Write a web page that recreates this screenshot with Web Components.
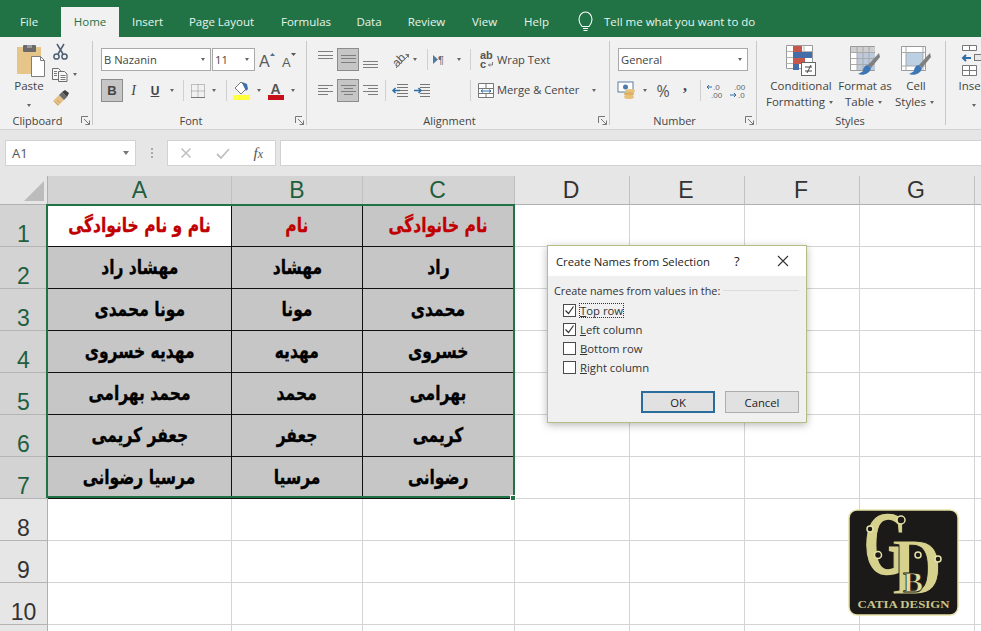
<!DOCTYPE html>
<html><head><meta charset="utf-8"><title>Excel</title>
<style>html,body{margin:0;padding:0;background:#fff}</style>
</head><body>
<x-app>
  <x-tabbar></x-tabbar>
  <x-ribbon>
    <x-rgroup w="93" label="Clipboard" launcher>
      <x-row pt="8">
        <x-sp w="4"></x-sp>
        <x-big w="50" icon="paste" iw="28" ih="32" ix="3"><span>Paste</span><br><x-caret></x-caret></x-big>
        <x-col>
          <x-tool w="18" h="23"><x-ico name="scissors" w="15" h="16"></x-ico></x-tool>
          <x-row><x-tool w="18" h="23"><x-ico name="copy" w="16" h="15"></x-ico></x-tool><x-caret w="12"></x-caret></x-row>
          <x-tool w="18" h="23"><x-ico name="brush" w="17" h="16"></x-ico></x-tool>
        </x-col>
      </x-row>
    </x-rgroup>
    <x-rgroup w="214" label="Font" launcher>
      <x-row pt="11" pl="8">
        <x-combo w="110" text="B Nazanin"></x-combo><x-sp w="1"></x-sp><x-combo w="43" text="11"></x-combo>
        <x-tool w="22" h="23"><x-ico name="grow" w="18" h="18"></x-ico></x-tool>
        <x-tool w="22" h="23"><x-ico name="shrink" w="18" h="18"></x-ico></x-tool>
      </x-row>
      <x-row pt="8" pl="8">
        <x-tool w="22" h="23" pressed><b style="font:bold 13px 'Liberation Sans',sans-serif;color:#444">B</b></x-tool>
        <x-tool w="21" h="23"><i style="font:italic 14px 'Liberation Serif',serif;color:#444">I</i></x-tool>
        <x-tool w="22" h="23"><b style="font:bold 12px 'Liberation Sans',sans-serif;color:#444;text-decoration:underline">U</b></x-tool>
        <x-caret w="12"></x-caret><x-sep w="10"></x-sep>
        <x-tool w="20" h="23"><x-ico name="borders" w="14" h="14"></x-ico></x-tool>
        <x-caret w="12"></x-caret><x-sep w="12"></x-sep>
        <x-tool w="20" h="23"><x-ico name="fill" w="18" h="19"></x-ico></x-tool>
        <x-caret w="14"></x-caret>
        <x-tool w="20" h="23"><x-ico name="fontcolor" w="18" h="19"></x-ico></x-tool>
        <x-sp w="1"></x-sp><x-caret w="12"></x-caret>
      </x-row>
    </x-rgroup>
    <x-rgroup w="303" label="Alignment" launcher>
      <x-row pt="11" pl="11">
        <x-tool w="15" h="23"><x-ico name="atop" w="15" h="23"></x-ico></x-tool><x-sp w="4"></x-sp>
        <x-tool w="22" h="23" pressed><x-ico name="amid" w="15" h="21"></x-ico></x-tool>
        <x-tool w="22" h="23"><x-ico name="abot" w="15" h="23"></x-ico></x-tool>
        <x-sp w="9"></x-sp>
        <x-tool w="20" h="23"><x-ico name="orient" w="18" h="18"></x-ico></x-tool><x-caret w="10"></x-caret>
        <x-sp w="2"></x-sp><x-sep w="10"></x-sep>
        <x-tool w="16" h="23"><x-ico name="rtl" w="14" h="12"></x-ico></x-tool><x-sp w="6"></x-sp><x-caret w="10"></x-caret>
        <x-sp w="1"></x-sp><x-sep w="10"></x-sep><x-sp w="4"></x-sp>
        <x-tool w="14" h="23"><x-ico name="wrap" w="14" h="18"></x-ico></x-tool><x-sp w="4"></x-sp>
        <x-tool h="23" text>Wrap Text</x-tool>
      </x-row>
      <x-row pt="8" pl="11">
        <x-tool w="15" h="23"><x-ico name="aleft" w="15" h="15"></x-ico></x-tool><x-sp w="4"></x-sp>
        <x-tool w="22" h="23" pressed><x-ico name="acenter" w="15" h="13"></x-ico></x-tool>
        <x-tool w="22" h="23"><x-ico name="aright" w="15" h="15"></x-ico></x-tool>
        <x-sep w="8"></x-sep>
        <x-tool w="20" h="23"><x-ico name="outdent" w="17" h="14"></x-ico></x-tool><x-sp w="2"></x-sp>
        <x-tool w="20" h="23"><x-ico name="indent" w="17" h="14"></x-ico></x-tool>
        <x-sp w="34"></x-sp><x-sep w="10"></x-sep><x-sp w="3"></x-sp>
        <x-tool w="16" h="23"><x-ico name="merge" w="16" h="15"></x-ico></x-tool><x-sp w="3"></x-sp>
        <x-tool w="85" h="23" text><span style="position:relative;top:-1px">Merge &amp; Center</span></x-tool><x-sp w="7"></x-sp><x-caret w="10"></x-caret>
      </x-row>
    </x-rgroup>
    <x-rgroup w="147" label="Number" launcher>
      <x-row pt="11" pl="8"><x-combo w="130" text="General"></x-combo></x-row>
      <x-row pt="8" pl="8">
        <x-tool w="18" h="23"><x-ico name="currency" w="18" h="17"></x-ico></x-tool><x-sp w="4"></x-sp><x-caret w="10"></x-caret><x-sp w="3"></x-sp>
        <x-tool w="20" h="23"><span style="font:16px 'Open Sans',sans-serif;color:#555">%</span></x-tool><x-sp w="2"></x-sp>
        <x-tool w="20" h="23"><b style="font:bold 16px 'Liberation Serif',serif;color:#444;position:relative;top:-5px">,</b></x-tool>
        <x-sep w="10"></x-sep>
        <x-tool w="20" h="23"><x-ico name="incdec" w="18" h="16"></x-ico></x-tool><x-sp w="3"></x-sp>
        <x-tool w="20" h="23"><x-ico name="decdec" w="18" h="16"></x-ico></x-tool>
      </x-row>
    </x-rgroup>
    <x-rgroup w="189" label="Styles" lshift="2">
      <x-row pt="8" pl="10">
        <x-big w="68" icon="cond" iw="30" ih="32">Conditional<br>Formatting<x-caret inline></x-caret></x-big>
        <x-big w="60" icon="fmttable" iw="30" ih="32">Format as<br>Table<x-caret inline></x-caret></x-big>
        <x-big w="42" icon="cellstyles" iw="30" ih="32">Cell<br>Styles<x-caret inline></x-caret></x-big>
      </x-row>
    </x-rgroup>
    <x-rgroup w="60" label="">
      <x-row pt="8" pl="3">
        <x-big w="50" icon="insert" iw="24" ih="32">Insert<br><x-caret></x-caret></x-big>
      </x-row>
    </x-rgroup>
  </x-ribbon>
  <x-formulabar></x-formulabar>
  <x-sheet></x-sheet>
  <x-dialog heading="Create Names from Selection">
    <span slot="legend">Create names from values in the:</span>
    <x-check checked focus key="T" rest="op row"></x-check>
    <x-check checked key="L" rest="eft column"></x-check>
    <x-check key="B" rest="ottom row"></x-check>
    <x-check key="R" rest="ight column"></x-check>
    <x-dbtn slot="buttons" default>OK</x-dbtn>
    <x-dbtn slot="buttons">Cancel</x-dbtn>
  </x-dialog>
  <x-logo></x-logo>
</x-app>
<script>
const UI = "'Open Sans','Noto Sans',sans-serif";
const line = (x1,x2,y,c='#7d7d7d')=>`<path d="M${x1} ${y+.5}H${x2}" stroke="${c}"/>`;
const ICONS = {
 paste:`<rect x="0" y="2" width="24" height="27" fill="#e6c588"/><rect x="6" y="0" width="13" height="7" rx="1" fill="#6a6a6a"/><rect x="10" y="0" width="5" height="3" fill="#9a9a9a"/><path d="M14.5 11.5h9l4 4v16h-13z" fill="#fff" stroke="#7d7d7d"/><path d="M23.5 11.5v4h4" fill="none" stroke="#7d7d7d"/>`,
 scissors:`<g fill="none" stroke="#4e5f73" stroke-width="1.5"><circle cx="3.5" cy="12.5" r="2.6"/><circle cx="11.5" cy="12.5" r="2.6"/><path d="M5 10 11 0M10 10 4 0"/></g>`,
 copy:`<g fill="#f6f6f6" stroke="#6d6d6d"><path d="M.5 1.5h6l2 2v9h-8z"/><path d="M6.5 4.5h6l2.5 2.5v7.5h-8.500z"/></g><path d="M8.500 8.500h5M8.500 10.500h5M8.500 12.500h5M2 4.500h3M2 6.500h3M2 8.500h3" stroke="#7a7a7a"/>`,
 brush:`<path d="M1 11 7 5l5 5-6 6z" fill="#e3c083"/><path d="M7 5l3-3 5 5-3 3z" fill="#6c6c6c"/><path d="M10 2l3-2 4 3-2 4z" fill="#3f3f3f"/><path d="M3 12l3 3M5 10l3 3" stroke="#c9a264"/>`,
 grow:`<text x="2" y="16" font-family="Liberation Sans" font-size="16" fill="#5a5a5a">A</text><path d="M13 5l2.500-3 2.500 3z" fill="#4f6f8f"/>`,
 shrink:`<text x="3" y="16" font-family="Liberation Sans" font-size="13" fill="#5a5a5a">A</text><path d="M12 2l2.500 3 2.500-3z" fill="#555"/>`,
 borders:`<path d="M.5.5h13v13H.5zM7 .5v13M.5 7h13" fill="none" stroke="#8a8a8a" stroke-dasharray="1 1"/><path d="M0 13.500h14" stroke="#777"/>`,
 fill:`<path d="M8 1 14 7 8 13 2 7z" fill="#fff" stroke="#777"/><path d="M9 1l5 2 1 5-2 2-3-6z" fill="#3f6fa8"/><rect x="0" y="14" width="17" height="5" fill="#ffff3c"/>`,
 fontcolor:`<text x="3.500" y="13" font-family="Liberation Sans" font-weight="bold" font-size="14" fill="#555">A</text><rect x="1" y="14" width="16" height="5" fill="#c8101a"/>`,
 atop:[3,7,10].map(y=>line(0,15,y)).join(''),
 amid:[6,9,13].map(y=>line(0,15,y)).join(''),
 abot:[13,16,19].map(y=>line(0,15,y)).join(''),
 aleft:[2,5,8,11].map((y,i)=>line(0,i%2?10:15,y)).join(''),
 acenter:[1,4,7,10].map((y,i)=>line(i%2?3:0,i%2?12:15,y)).join(''),
 aright:[2,5,8,11].map((y,i)=>line(i%2?5:0,15,y)).join(''),
 orient:`<g transform="rotate(-45 8 9)"><text x="1" y="13" font-family="Liberation Sans" font-size="12" fill="#555">ab</text></g><path d="M5 17 17 5" stroke="#777"/><path d="M14 3h4v4z" fill="#777"/>`,
 rtl:`<path d="M0 1v9l5-4.500z" fill="#4b7aa8"/><text x="5" y="10" font-family="Liberation Sans" font-size="11" fill="#666">¶</text>`,
 wrap:`<text x="1" y="8" font-family="Liberation Sans" font-size="11" font-weight="bold" fill="#555">ab</text><text x="1" y="17" font-family="Liberation Sans" font-size="11" font-weight="bold" fill="#555">c</text><path d="M13.500 11v3h-4M11 12.500 9.500 14l1.500 1.500" fill="none" stroke="#7a7a7a"/>`,
 outdent:[0,3,6,9,12].map(y=>line(6,17,y,'#777')).join('')+`<path d="M9 6.500H2M4.500 4 2 6.500 4.500 9" fill="none" stroke="#2f6ea5" stroke-width="1.500"/>`,
 indent:[0,3,6,9,12].map(y=>line(7,17,y,'#777')).join('')+`<path d="M1 6.500h7M5.500 4 8 6.500 5.500 9" fill="none" stroke="#2f6ea5" stroke-width="1.500"/>`,
 merge:`<path d="M.5.500h15v14H.5zM.5 5.500h15M.5 10.500h15M8 .5v5M8 10.500v4" fill="#fdfdfd" stroke="#777"/><path d="M3 8h10M5 6.500 3 8l2 1.500M11 6.500 13 8l-2 1.500" fill="none" stroke="#2f6ea5"/>`,
 currency:`<rect x="0" y="0" width="15" height="10" fill="#fff" stroke="#5b7f9c"/><circle cx="7.500" cy="5" r="2.500" fill="#4b7aa8"/><ellipse cx="12" cy="9" rx="5" ry="2" fill="#e7c27c"/><ellipse cx="11" cy="12" rx="5" ry="2" fill="#dcb266"/><ellipse cx="11" cy="15" rx="5" ry="2" fill="#e7c27c"/>`,
 incdec:`<text x="7" y="7" font-family="Liberation Sans" font-size="8" fill="#666">.0</text><text x="5" y="15" font-family="Liberation Sans" font-size="8" fill="#666">.00</text><path d="M6 4H1M3 2 1 4l2 2" fill="none" stroke="#2f6ea5"/>`,
 decdec:`<text x="5" y="7" font-family="Liberation Sans" font-size="8" fill="#666">.00</text><text x="9" y="15" font-family="Liberation Sans" font-size="8" fill="#666">.0</text><path d="M1 12h6M5 10l2 2-2 2" fill="none" stroke="#2f6ea5"/>`,
 cond:`<path d="M.5.500h26v23H.5z" fill="#fff" stroke="#9a9a9a"/><path d="M.5 6.500h26M.5 12.500h26M.5 18.500h26M9 .5v23M18 .5v23" stroke="#b5b5b5"/><rect x="7" y="1" width="9" height="6" fill="#c8574b"/><rect x="7" y="7" width="19" height="6" fill="#456ea8"/><rect x="7" y="13" width="12" height="6" fill="#c8574b"/><rect x="7" y="19" width="6" height="6" fill="#456ea8"/><rect x="15.500" y="17.500" width="14" height="13" fill="#fff" stroke="#666"/><path d="M19 22h7M19 26h7M25 20l-4 8" stroke="#444" fill="none"/>`,
 fmttable:`<path d="M.5 1.500h24v24H.5z" fill="#fff" stroke="#9a9a9a"/><rect x="7" y="8" width="18" height="17" fill="#bccadb"/><rect x="1" y="2" width="24" height="5" fill="#cfcfcf"/><path d="M.5 7.500h24M.5 13.500h24M.5 19.500h24M7 1.500v24M13 1.500v24M19 1.500v24" stroke="#a9a9a9"/><path d="M29 8 18 20l3 3L30 12z" fill="#808080"/><path d="M18 20c-3 0-5 3-5 6-1 1-3 2-5 3 5 2 12 0 13-6z" fill="#3f77b5"/>`,
 cellstyles:`<path d="M.5 1.500h24v24H.5z" fill="#fff" stroke="#9a9a9a"/><rect x="5" y="7" width="17" height="14" fill="#bccfe3"/><path d="M.5 7.500h24M.5 21h24M5 1.500v24M22 1.500v24" stroke="#a9a9a9"/><path d="M29 8 18 20l3 3L30 12z" fill="#808080"/><path d="M18 20c-3 0-5 3-5 6-1 1-3 2-5 3 5 2 12 0 13-6z" fill="#3f77b5"/>`,
 insert:`<path d="M.5.500h14v5H.5zM.5 20.500h14v10H.5zM7.500 20.500v10M.5 25.500h14M7.500.5v5" fill="#fff" stroke="#777"/><path d="M9 13H1M4 10l-3 3 3 3" fill="none" stroke="#2f6ea5" stroke-width="2"/><rect x="12.500" y="9.500" width="11" height="6" fill="#e8e8e8" stroke="#777"/>`,
 bulb:`<path d="M4 15.500C2 13 1 11.500 1 8.500 1 4 4 1 7.500 1S14 4 14 8.500c0 3-1 4.500-3 7z" fill="none" stroke="#fff" stroke-width="1.100"/><path d="M5 17.500h5M5.500 19.500h4" stroke="#fff"/>`,
 launcher:`<path d="M.5 7V.5H7M3 3l5.500 5.500M8.500 4.500v4h-4" fill="none" stroke="#777"/>`
};
function shadow(el,html){const r=el.attachShadow({mode:'open'});r.innerHTML=html;return r;}
const def=(n,c)=>customElements.define(n,c);

def('x-app',class extends HTMLElement{constructor(){super();shadow(this,`<style>:host{display:flex;flex-direction:column;position:relative;width:981px;height:631px;overflow:hidden;background:#fff;font:12px ${UI};color:#444}</style><slot></slot>`)}});

def('x-ico',class extends HTMLElement{connectedCallback(){if(this.shadowRoot)return;const n=this.getAttribute('name'),w=this.getAttribute('w'),h=this.getAttribute('h');
 shadow(this,`<style>:host{display:block;width:${w}px;height:${h}px;flex:none}svg{display:block;overflow:visible}</style><svg width="${w}" height="${h}" viewBox="0 0 ${w} ${h}">${ICONS[n]||''}</svg>`)}});

def('x-tabbar',class extends HTMLElement{constructor(){super();
 const tabs=[['File',58],['Home',58,1],['Insert',57],['Page Layout',91],['Formulas',78],['Data',48],['Review',67],['View',49],['Help',55]];
 shadow(this,`<style>:host{display:flex;height:37px;background:#217346;flex:none;font:11.5px ${UI};color:#e8f3ec}
 .t{display:flex;align-items:center;justify-content:center;box-sizing:border-box;height:30px;margin-top:7px;padding-bottom:2px;white-space:nowrap}
 .on{background:#f1f1f1;color:#217346}.f{margin-right:3px}
 .tell{display:flex;align-items:center;box-sizing:border-box;height:30px;margin-top:7px;padding-bottom:2px;margin-left:14px;gap:11px;white-space:nowrap;color:#e8f3ec}</style>`+
 tabs.map(([t,w,on],i)=>`<div class="t ${on?'on':''} ${i==0?'f':''}" style="width:${w}px">${t}</div>`).join('')+
 `<div class="tell"><x-ico name="bulb" w="15" h="20"></x-ico><span>Tell me what you want to do</span></div>`)}});

def('x-ribbon',class extends HTMLElement{constructor(){super();shadow(this,`<style>:host{display:flex;height:92px;background:#f1f1f1;border-bottom:1px solid #d2d2d2;flex:none;overflow:hidden}</style><slot></slot>`)}});

def('x-rgroup',class extends HTMLElement{connectedCallback(){if(this.shadowRoot)return;const w=this.getAttribute('w'),l=this.getAttribute('label'),la=this.hasAttribute('launcher'),ls=this.getAttribute('lshift')||0;
 shadow(this,`<style>:host{display:flex;width:${w}px;height:92px;flex:none;box-sizing:border-box}
 .c{flex:1;display:flex;flex-direction:column;min-width:0}.m{height:75px;overflow:visible}
 .b{height:17px;display:flex;align-items:center;font:11px ${UI};color:#444;padding-right:${la?2:0}px}
 .l{flex:1;text-align:center;white-space:nowrap}.la{width:9px;margin-left:1px;display:${la?'block':'none'}}
 .s{width:1px;background:#c8c8c8;margin:4px 0 4px;flex:none}</style>
 <div class="c"><div class="m"><slot></slot></div><div class="b"><span class="l" style="padding-right:${la?5:ls}px">${l}</span><span class="la"><x-ico name="launcher" w="9" h="9"></x-ico></span></div></div><div class="s"></div>`)}});

def('x-row',class extends HTMLElement{connectedCallback(){if(this.shadowRoot)return;
 shadow(this,`<style>:host{display:flex;align-items:flex-start;padding-left:${this.getAttribute('pl')||0}px;padding-top:${this.getAttribute('pt')||0}px}</style><slot></slot>`)}});
def('x-col',class extends HTMLElement{constructor(){super();shadow(this,`<style>:host{display:flex;flex-direction:column;margin:-5px 0 0 -3px}</style><slot></slot>`)}});
def('x-sp',class extends HTMLElement{connectedCallback(){if(this.shadowRoot)return;shadow(this,`<style>:host{display:block;flex:none;width:${this.getAttribute('w')}px;height:1px}</style>`)}});
def('x-sep',class extends HTMLElement{connectedCallback(){if(this.shadowRoot)return;shadow(this,`<style>:host{display:flex;justify-content:center;flex:none;width:${this.getAttribute('w')}px;height:23px}i{display:block;width:1px;height:21px;margin-top:1px;background:#d0d0d0}</style><i></i>`)}});
def('x-caret',class extends HTMLElement{connectedCallback(){if(this.shadowRoot)return;const inl=this.hasAttribute('inline'),w=this.getAttribute('w')||(inl?11:10);
 shadow(this,`<style>:host{display:inline-flex;width:${w}px;height:${inl?10:23}px;align-items:center;justify-content:center;flex:none;vertical-align:${inl?'middle':'top'}}i{display:block;width:0;height:0;border:2.5px solid transparent;border-top:3px solid #666;border-bottom:0}</style><i></i>`)}});
def('x-tool',class extends HTMLElement{connectedCallback(){if(this.shadowRoot)return;const w=this.getAttribute('w'),h=this.getAttribute('h'),p=this.hasAttribute('pressed'),t=this.hasAttribute('text');
 shadow(this,`<style>:host{display:flex;align-items:center;justify-content:${t?'flex-start':'center'};flex:none;box-sizing:border-box;${w?`width:${w}px;`:''}height:${h}px;white-space:nowrap;font:11.2px ${UI};color:#444;${p?'background:#c6c6c6;border:1px solid #8c8c8c;':''}}</style><slot></slot>`)}});
def('x-combo',class extends HTMLElement{connectedCallback(){if(this.shadowRoot)return;
 shadow(this,`<style>:host{display:flex;align-items:center;box-sizing:border-box;width:${this.getAttribute('w')}px;height:23px;flex:none;background:#fff;border:1px solid #a9a9a9;padding-left:2px;font:11.2px ${UI};color:#444}
 span{flex:1}x-caret{height:21px}</style><span>${this.getAttribute('text')}</span><x-caret></x-caret><b style="width:2px"></b>`)}});
def('x-big',class extends HTMLElement{connectedCallback(){if(this.shadowRoot)return;const iw=this.getAttribute('iw'),ih=this.getAttribute('ih'),ix=this.getAttribute('ix')||0;
 shadow(this,`<style>:host{display:flex;flex-direction:column;align-items:center;width:${this.getAttribute('w')}px;flex:none;font:11.5px/16px ${UI};color:#444;text-align:center;white-space:nowrap}
 x-ico{margin-bottom:1px;margin-left:${ix}px}.tx{display:block}</style><x-ico name="${this.getAttribute('icon')}" w="${iw}" h="${ih}"></x-ico><div class="tx"><slot></slot></div>`)}});

def('x-formulabar',class extends HTMLElement{constructor(){super();shadow(this,`<style>:host{display:flex;height:46px;box-sizing:border-box;padding-top:10px;background:#e6e6e6;flex:none;align-items:flex-start}
 .b{height:26px;box-sizing:border-box;background:#fff;border:1px solid #d2d2d2;display:flex;align-items:center}
 .n{width:131px;margin-left:5px;padding:0 7px 0 6px;font:13px ${UI};color:#555;justify-content:space-between}
 .n i{width:0;height:0;border:3.5px solid transparent;border-top:4px solid #777;border-bottom:0;margin-right:-1px}
 .d{width:31px;height:26px;display:flex;flex-direction:column;align-items:center;justify-content:center;gap:2px}.d i{width:2px;height:2px;background:#aaa}
 .x{width:109px;justify-content:space-between;padding:0 12px 0 12px}.x svg{display:block}
 .x em{font:italic 15px 'Liberation Serif',serif;color:#555}.x small{font-size:12px}
 .i{flex:1;margin-left:4px;border-right:0}</style>
 <div class="b n"><span>A1</span><i></i></div><div class="d"><i></i><i></i><i></i></div>
 <div class="b x"><svg width="12" height="12"><path d="M1.500 1.500l9 9M10.500 1.500l-9 9" stroke="#c0c0c0" stroke-width="1.600"/></svg><svg width="14" height="12"><path d="M1 7l4 4 8-9" stroke="#c0c0c0" stroke-width="1.800" fill="none"/></svg><em>f<small>x</small></em></div>
 <div class="b i"></div>`)}});

def('x-sheet',class extends HTMLElement{constructor(){super();
 const data=[['نام و نام خانوادگی','نام','نام خانوادگی'],['مهشاد راد','مهشاد','راد'],['مونا محمدی','مونا','محمدی'],['مهدیه خسروی','مهدیه','خسروی'],['محمد بهرامی','محمد','بهرامی'],['جعفر کریمی','جعفر','کریمی'],['مرسیا رضوانی','مرسیا','رضوانی']];
 const cols=['A','B','C','D','E','F','G',''];
 let h=`<div class="corner"><svg width="47" height="28"><path d="M44 5v20H24z" fill="#bcbcbc"/></svg></div>`;
 cols.forEach((c,i)=>h+=`<div class="ch ${i<3?'sel':''} ${i>=2?'sh':''}">${c}</div>`);
 for(let r=0;r<11;r++){h+=`<div class="rh ${r<7?'sel':''}"><span>${r<10?r+1:''}</span></div>`;
  cols.forEach((c,i)=>{const d=data[r]&&data[r][i];
   if(d!==undefined)h+=`<div class="d ${r==0?'hd':''} ${r==0&&i==0?'w':''}" dir="rtl"><bdi>${d}</bdi></div>`;else h+=`<div class="e"></div>`;});}
 shadow(this,`<style>:host{display:grid;position:relative;flex:1;overflow:hidden;grid-template-columns:48px 184px 131px 152px 115px 115px 115px 115px 40px;grid-template-rows:29px repeat(11,42px);background:#fff;font-family:'Liberation Sans',sans-serif}
 .corner{background:#e6e6e6;border-bottom:1px solid #b0b0b0;border-right:1px solid #b0b0b0;box-sizing:border-box}.corner svg{display:block}
 .ch{background:#e6e6e6;border-right:1px solid #c0c0c0;border-bottom:1px solid #b0b0b0;box-sizing:border-box;display:flex;align-items:center;justify-content:center;font-size:23px;color:#333}
 .ch.sh{padding-right:2px}
 .ch.sel{background:#d3d3d3;color:#1f5f3f}
 .rh{background:#e6e6e6;border-bottom:1px solid #b4b4b4;border-right:1px solid #b0b0b0;box-sizing:border-box;display:flex;align-items:flex-end;justify-content:center;font-size:23px;line-height:26px;color:#333}
 .rh span{transform:translateY(1px)}
 .rh.sel{background:#d3d3d3;color:#1f5f3f}
 .e{border-right:1px solid #d4d4d4;border-bottom:1px solid #d4d4d4;box-sizing:border-box}
 .d{background:#c6c6c6;border-right:1px solid #111;border-bottom:1px solid #111;box-sizing:border-box;display:flex;align-items:center;justify-content:center;font:bold 16px 'DejaVu Sans',sans-serif;color:#000;white-space:nowrap}
 .d bdi{display:inline-block;transform:scale(.97,1.25);-webkit-text-stroke:.25px currentColor}
 .hd{color:#c00000}.w{background:#fff}
 .sel-box{position:absolute;left:46px;top:28px;width:469px;height:294px;box-sizing:border-box;border:2px solid #217346;pointer-events:none}
 .sel-box i{position:absolute;right:-3px;bottom:-5px;width:4px;height:4px;background:#217346;border:1px solid #fff;box-sizing:content-box}
 </style>`+h+`<div class="sel-box"><i></i></div>`)}});

def('x-check',class extends HTMLElement{connectedCallback(){if(this.shadowRoot)return;const c=this.hasAttribute('checked'),f=this.hasAttribute('focus');
 shadow(this,`<style>:host{display:flex;align-items:center;height:19px;gap:3px;font:11.3px ${UI};color:#333}
 .b{width:13px;height:13px;box-sizing:border-box;border:1px solid #4a4a4a;background:#fff;flex:none}.b svg{display:block}
 .t{padding:0 1px;${f?'outline:1px dotted #333;outline-offset:-1px;':''}}u{text-underline-offset:1px}</style>
 <div class="b">${c?'<svg width="11" height="11"><path d="M1.500 5.500l3 3 5-7" fill="none" stroke="#333" stroke-width="1.200"/></svg>':''}</div><span class="t"><u>${this.getAttribute('key')}</u>${this.getAttribute('rest')}</span>`)}});
def('x-dbtn',class extends HTMLElement{connectedCallback(){if(this.shadowRoot)return;const d=this.hasAttribute('default');
 shadow(this,`<style>:host{display:flex;align-items:center;justify-content:center;width:74px;height:22px;box-sizing:border-box;background:#e1e1e1;border:${d?'2px solid #2a6d9a':'1px solid #adadad'};font:11.3px ${UI};color:#222}</style><slot></slot>`)}});
def('x-dialog',class extends HTMLElement{connectedCallback(){if(this.shadowRoot)return;
 shadow(this,`<style>:host{position:absolute;left:547px;top:245px;width:260px;height:178px;box-sizing:border-box;display:flex;flex-direction:column;background:#f0f0f0;border:1px solid #b4bd84;box-shadow:0 2px 8px rgba(0,0,0,.28);font:10.8px ${UI};color:#333}
 .h{height:30px;background:#fff;display:flex;align-items:center;padding-left:8px;flex:none;font-size:11.3px;color:#222}
 .ti{width:178px;white-space:nowrap}.q{width:43px;font-size:13px}
 .b{flex:1;display:flex;flex-direction:column;padding:7px 7px 9px 6px}
 .lg{display:flex;align-items:center;gap:3px;white-space:nowrap;height:14px}.lg i{flex:1;height:1px;background:#dcdcdc}
 .c{display:flex;flex-direction:column;padding:4px 0 0 9px;flex:1}
 .f{display:flex;justify-content:flex-end;gap:10px;padding-right:0}</style>
 <div class="h"><span class="ti">${this.getAttribute('heading')}</span><span class="q">?</span><svg width="12" height="12"><path d="M1 1l10 10M11 1 1 11" stroke="#333" stroke-width="1.100"/></svg></div>
 <div class="b"><div class="lg"><slot name="legend"></slot><i></i></div><div class="c"><slot></slot></div><div class="f"><slot name="buttons"></slot></div></div>`)}});

def('x-logo',class extends HTMLElement{constructor(){super();
 shadow(this,`<style>:host{position:absolute;left:848px;top:509px;width:111px;height:107px}svg{display:block}</style>
 <svg width="111" height="107" viewBox="0 0 111 107">
 <rect x="1" y="1" width="109" height="105" rx="8" fill="#1b1a18" stroke="#e6e2a8" stroke-width="1.500"/>
 <text x="16" y="64" font-family="Liberation Serif" font-weight="bold" font-size="88" fill="#d6d18c" stroke="#d6d18c" stroke-width="1.500" textLength="44" lengthAdjust="spacingAndGlyphs">G</text>
 <text x="44" y="85" font-family="Liberation Serif" font-weight="bold" font-size="80" fill="#d6d18c" stroke="#1b1a18" stroke-width="1" textLength="50" lengthAdjust="spacingAndGlyphs">D</text>
 <text x="55" y="83" font-family="Liberation Serif" font-weight="bold" font-size="30" fill="#e2dd9c" stroke="#1b1a18" stroke-width=".8">B</text>
 <g fill="#1b1a18" stroke="#e6e2a8" stroke-width="1.500"><circle cx="22" cy="20" r="3"/><circle cx="53" cy="11" r="4"/><circle cx="30" cy="46" r="3.500"/><circle cx="70" cy="46" r="3"/><circle cx="90" cy="50" r="3"/></g>
 <text x="55.500" y="99" text-anchor="middle" font-family="Liberation Serif" font-weight="bold" font-size="11" fill="#c9c58c" textLength="92" lengthAdjust="spacingAndGlyphs">CATIA DESIGN</text>
 </svg>`)}});
</script>
</body></html>
